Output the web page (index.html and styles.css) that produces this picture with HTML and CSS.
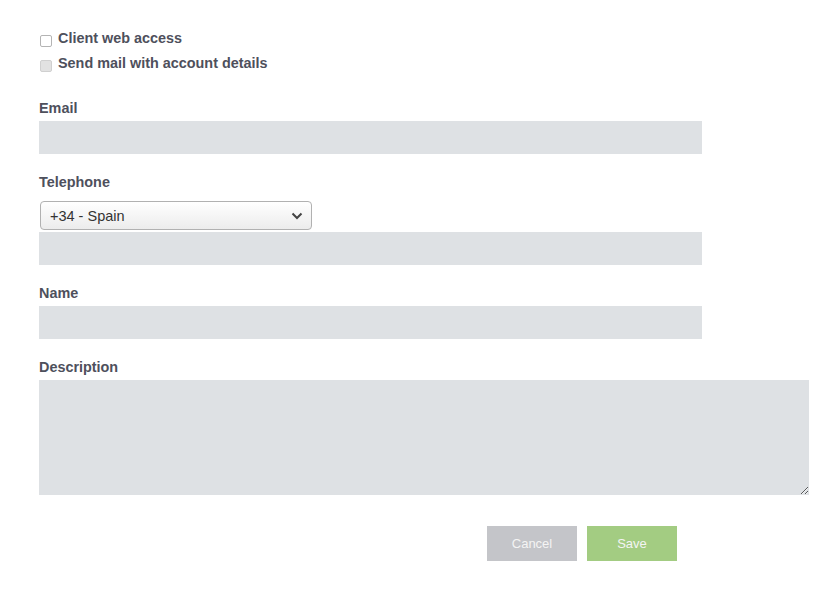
FILE: index.html
```html
<!DOCTYPE html>
<html lang="en">
<head>
    <meta charset="UTF-8">
    <meta name="viewport" content="width=device-width, initial-scale=1.0">
    <title>New client</title>
    <link rel="stylesheet" href="styles.css">
</head>
<body>

    <form class="client-form">
        <div class="checks">
            <label class="check-row"><input type="checkbox" id="webAccess"> Client web access</label>
            <label class="check-row"><input type="checkbox" id="sendMail" disabled> Send mail with account details</label>
        </div>

        <div class="field">
            <label for="email">Email</label>
            <input type="text" id="email" class="text-input">
        </div>

        <div class="field">
            <label for="phone">Telephone</label>
            <div class="select-wrap">
                <select id="prefix" class="prefix-select">
                    <option>+34 - Spain</option>
                    <option>+33 - France</option>
                    <option>+44 - United Kingdom</option>
                </select>
                <svg class="select-arrow" width="12" height="8" viewBox="0 0 12 8">
                    <path d="M1.5 1.5 L6 6 L10.5 1.5" fill="none" stroke="#444" stroke-width="2"/>
                </svg>
            </div>
            <input type="text" id="phone" class="text-input">
        </div>

        <div class="field">
            <label for="name">Name</label>
            <input type="text" id="name" class="text-input">
        </div>

        <div class="field">
            <label for="description">Description</label>
            <textarea id="description" class="text-area"></textarea>
        </div>

        <div class="actions">
            <button type="button" class="btn btn-cancel">Cancel</button>
            <button type="button" class="btn btn-save">Save</button>
        </div>
    </form>

</body>
</html>
```

FILE: styles.css
```css
body {
    margin: 0;
    font-family: "Liberation Sans", Arial, sans-serif;
    background-color: #ffffff;
    color: #4e505c;
}
.client-form {
    padding: 28px 0 0 39px;
}
.checks {
    display: flex;
    flex-direction: column;
    gap: 5px;
    margin-bottom: 25px;
}
.check-row {
    display: flex;
    align-items: center;
    height: 20px;
    font-size: 14.4px;
    font-weight: bold;
}
.check-row input {
    appearance: none;
    -webkit-appearance: none;
    box-sizing: border-box;
    width: 12px;
    height: 12px;
    margin: 6px 6px 0 1px;
    border: 1px solid #b4b4b4;
    border-radius: 2px;
    background: #fff;
}
.check-row input:disabled {
    background: #e2e2e2;
    border-color: #d0d0d0;
}
.field {
    display: flex;
    flex-direction: column;
    margin-bottom: 18px;
}
.field label {
    font-size: 14.4px;
    font-weight: bold;
    line-height: 20px;
    margin-bottom: 3px;
}
.text-input {
    width: 663px;
    height: 33px;
    box-sizing: border-box;
    border: none;
    background: #dee1e4;
    padding: 0 10px;
    font-family: inherit;
    font-size: 14px;
}
.select-wrap {
    position: relative;
    width: 272px;
    margin: 6px 0 2px 1px;
}
.prefix-select {
    appearance: none;
    -webkit-appearance: none;
    display: block;
    width: 100%;
    height: 29px;
    box-sizing: border-box;
    padding: 0 30px 0 9px;
    border: 1px solid #b1b1b1;
    border-radius: 4px;
    background: linear-gradient(#ffffff, #ececec);
    font-family: "Liberation Sans", Arial, sans-serif;
    font-size: 14.5px;
    color: #333;
}
.select-arrow {
    position: absolute;
    right: 9px;
    top: 11px;
    pointer-events: none;
}
.text-area {
    width: 770px;
    height: 115px;
    box-sizing: border-box;
    border: none;
    background: #dee1e4;
    padding: 8px 10px;
    font-family: inherit;
    font-size: 14px;
}
.actions {
    display: flex;
    gap: 10px;
    margin-top: 31px;
    padding-left: 448px;
}
.btn {
    width: 90px;
    height: 35px;
    border: none;
    font-family: "Liberation Sans", Arial, sans-serif;
    font-size: 13px;
    color: #f4f4f4;
    cursor: pointer;
}
.btn-cancel {
    background: #c4c5c9;
}
.btn-save {
    background: #a3cc82;
}
```
